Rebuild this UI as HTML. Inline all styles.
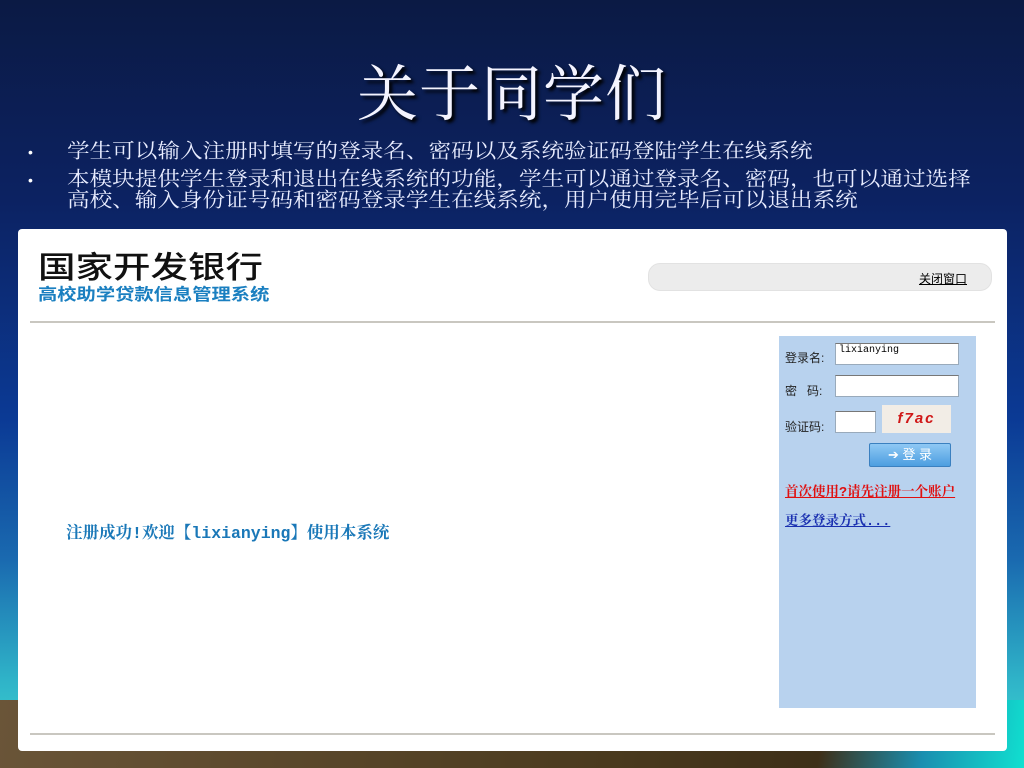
<!DOCTYPE html>
<html><head><meta charset="utf-8"><style>
*{margin:0;padding:0;box-sizing:border-box}
body{width:1024px;height:768px;overflow:hidden;position:relative;font-family:"Liberation Sans","Noto Sans CJK SC",sans-serif;
background:linear-gradient(180deg,#0b1a44 0px,#0c2262 200px,#0b3a95 420px,#1a6ab0 560px,#2fb3c8 680px,#3bcfd0 740px);}
.brown{position:absolute;left:0;top:700px;width:1024px;height:68px;background:linear-gradient(100deg,#6a5538 0%,#4a3a1e 60%,#3e2f18 80%,#1a8fb0 90%,#10e0d0 100%);}
h1{position:absolute;left:0;width:1024px;top:56px;text-align:center;font-family:"Liberation Serif","Noto Serif CJK SC",serif;font-weight:400;font-size:61px;color:#f4f4ff;line-height:80px;text-shadow:3px 3px 3px #000;letter-spacing:1px}
.b{position:absolute;left:67px;color:#e8ecff;font-family:"Liberation Serif","Noto Serif CJK SC",serif;font-size:22.6px;line-height:24px;width:940px;white-space:nowrap;transform:scaleY(0.87);transform-origin:0 0}
.dot{position:absolute;left:28px;color:#fff;font-size:14px}
.shot{position:absolute;left:18px;top:229px;width:989px;height:522px;background:#fff;border-radius:4px}
.t1{position:absolute;left:20px;top:18px;font-size:37.5px;color:#111;font-family:"Noto Sans CJK SC",sans-serif;font-weight:500;line-height:44px;white-space:nowrap;transform:scaleY(0.82);transform-origin:0 0}
.t2{position:absolute;left:20px;top:55px;font-size:19.3px;color:#1a7fc0;font-family:"Noto Sans CJK SC",sans-serif;font-weight:700;line-height:22px;white-space:nowrap;transform:scaleY(0.85);transform-origin:0 0}
.bar{position:absolute;left:630px;top:34px;width:344px;height:28px;background:#ececec;border-radius:12px;border:1px solid #e2e2e2}
.close{position:absolute;right:24px;top:6px;font-size:12px;color:#000;text-decoration:underline}
.hr{position:absolute;left:12px;width:965px;height:2px;background:#c9c7c0}
.panel{position:absolute;left:761px;top:107px;width:197px;height:372px;background:#b8d2ee}
.lbl{position:absolute;left:6px;font-size:12px;color:#222}
.in{position:absolute;background:#fff;border:1px solid #9ab;border-top-color:#777}
.cap{position:absolute;left:103px;top:69px;width:69px;height:28px;background:#f2ede6;color:#d01818;font-style:italic;font-weight:700;font-size:15px;text-align:center;line-height:28px;letter-spacing:2px}
.btn{position:absolute;left:90px;top:107px;width:82px;height:24px;background:linear-gradient(#8fc8f4,#4c9ee0);border:1px solid #3a80c0;border-radius:2px;color:#fff;font-size:13px;text-align:center;line-height:22px}
.lk{position:absolute;left:6px;font-size:13.5px;font-weight:700;text-decoration:underline;font-family:"Liberation Mono","Noto Serif CJK SC",monospace;white-space:nowrap}
.ok{position:absolute;left:48px;top:290px;font-size:16.5px;font-weight:700;color:#1a78b8;font-family:"Liberation Mono","Noto Serif CJK SC",monospace;white-space:nowrap}
</style></head><body>
<div class="brown"></div>
<h1>关于同学们</h1>
<div class="dot" style="top:144px">•</div>
<div class="b" style="top:141px">学生可以输入注册时填写的登录名、密码以及系统验证码登陆学生在线系统</div>
<div class="dot" style="top:172px">•</div>
<div class="b" style="top:169px">本模块提供学生登录和退出在线系统的功能，学生可以通过登录名、密码，也可以通过选择<br>高校、输入身份证号码和密码登录学生在线系统，用户使用完毕后可以退出系统</div>
<div class="shot">
<div class="t1">国家开发银行</div>
<div class="t2">高校助学贷款信息管理系统</div>
<div class="bar"><span class="close">关闭窗口</span></div>
<div class="hr" style="top:92px"></div>
<div class="panel">
<div class="lbl" style="top:13px">登录名:</div><div class="in" style="left:56px;top:7px;width:124px;height:22px;font-family:'Liberation Mono',monospace;font-size:10px;padding:1px 3px">lixianying</div>
<div class="lbl" style="top:46px">密 &nbsp; 码:</div><div class="in" style="left:56px;top:39px;width:124px;height:22px"></div>
<div class="lbl" style="top:82px">验证码:</div><div class="in" style="left:56px;top:75px;width:41px;height:22px"></div>
<div class="cap">f7ac</div>
<div class="btn">➔ 登 录</div>
<div class="lk" style="top:144px;color:#e01010">首次使用?请先注册一个账户</div>
<div class="lk" style="top:173px;color:#1a30b0">更多登录方式...</div>
</div>
<div class="ok">注册成功!欢迎【lixianying】使用本系统</div>
<div class="hr" style="top:504px"></div>
</div>
</body></html>
